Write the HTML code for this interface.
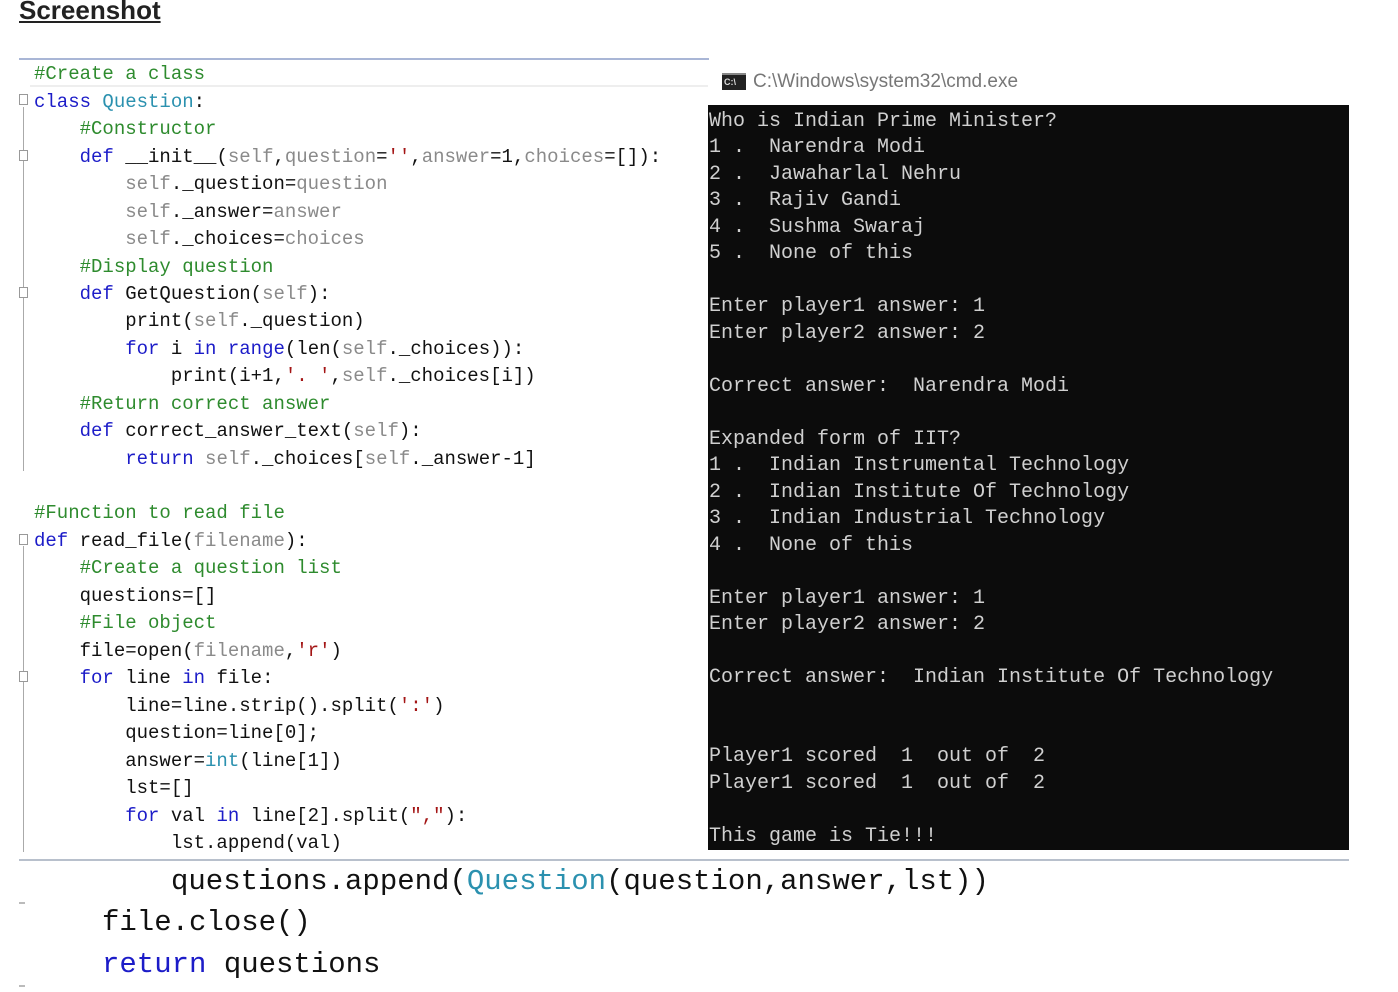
<!DOCTYPE html>
<html><head><meta charset="utf-8"><style>
body{margin:0;width:1398px;height:992px;background:#fff;position:relative;overflow:hidden;font-family:"Liberation Mono",monospace}
.h{position:absolute;left:19px;top:-5px;font:bold 26px "Liberation Sans",sans-serif;text-decoration:underline;color:#222}
.c{position:absolute;left:34px;height:28px;line-height:28px;font-size:19px;white-space:pre;color:#111;margin-top:2px}
.k{color:#1c1cc8}.m{color:#2e8b2e}.g{color:#8a8a8a}.t{color:#2b91af}.s{color:#a31515}
.tl{position:absolute;left:709px;height:26px;line-height:26px;font-size:20px;white-space:pre;color:#d0d0d0;margin-top:3px}
.b{position:absolute;height:42px;line-height:42px;font-size:29px;white-space:pre;color:#111;margin-top:2px}
.fold{position:absolute;left:19px;width:7px;height:9px;border:1px solid #999;background:#fff}
</style></head><body>
<div class="h">Screenshot</div>
<div style="position:absolute;left:19px;top:58px;width:690px;height:2px;background:#a9b6d6"></div>
<div style="position:absolute;left:30px;top:85px;width:678px;height:2px;background:#eee"></div>
<div style="position:absolute;left:23px;top:107px;width:1px;height:364px;background:#aaa"></div>
<div style="position:absolute;left:23px;top:546px;width:1px;height:306px;background:#aaa"></div>
<div class="fold" style="top:94px"></div><div class="fold" style="top:150px"></div><div class="fold" style="top:287px"></div><div class="fold" style="top:534px"></div><div class="fold" style="top:671px"></div>
<div class="c" style="top:58px"><span class="m">#Create a class</span></div>
<div class="c" style="top:86px"><span class="k">class</span> <span class="t">Question</span>:</div>
<div class="c" style="top:113px"><span class="m">    #Constructor</span></div>
<div class="c" style="top:141px">    <span class="k">def</span> __init__(<span class="g">self</span>,<span class="g">question</span>=<span class="s">''</span>,<span class="g">answer</span>=1,<span class="g">choices</span>=[]):</div>
<div class="c" style="top:168px">        <span class="g">self</span>._question=<span class="g">question</span></div>
<div class="c" style="top:196px">        <span class="g">self</span>._answer=<span class="g">answer</span></div>
<div class="c" style="top:223px">        <span class="g">self</span>._choices=<span class="g">choices</span></div>
<div class="c" style="top:251px"><span class="m">    #Display question</span></div>
<div class="c" style="top:278px">    <span class="k">def</span> GetQuestion(<span class="g">self</span>):</div>
<div class="c" style="top:305px">        print(<span class="g">self</span>._question)</div>
<div class="c" style="top:333px">        <span class="k">for</span> i <span class="k">in</span> <span class="k">range</span>(len(<span class="g">self</span>._choices)):</div>
<div class="c" style="top:360px">            print(i+1,<span class="s">'. '</span>,<span class="g">self</span>._choices[i])</div>
<div class="c" style="top:388px"><span class="m">    #Return correct answer</span></div>
<div class="c" style="top:415px">    <span class="k">def</span> correct_answer_text(<span class="g">self</span>):</div>
<div class="c" style="top:443px">        <span class="k">return</span> <span class="g">self</span>._choices[<span class="g">self</span>._answer-1]</div>
<div class="c" style="top:497px"><span class="m">#Function to read file</span></div>
<div class="c" style="top:525px"><span class="k">def</span> read_file(<span class="g">filename</span>):</div>
<div class="c" style="top:552px"><span class="m">    #Create a question list</span></div>
<div class="c" style="top:580px">    questions=[]</div>
<div class="c" style="top:607px"><span class="m">    #File object</span></div>
<div class="c" style="top:635px">    file=open(<span class="g">filename</span>,<span class="s">'r'</span>)</div>
<div class="c" style="top:662px">    <span class="k">for</span> line <span class="k">in</span> file:</div>
<div class="c" style="top:690px">        line=line.strip().split(<span class="s">':'</span>)</div>
<div class="c" style="top:717px">        question=line[0];</div>
<div class="c" style="top:745px">        answer=<span class="t">int</span>(line[1])</div>
<div class="c" style="top:772px">        lst=[]</div>
<div class="c" style="top:800px">        <span class="k">for</span> val <span class="k">in</span> line[2].split(<span class="s">","</span>):</div>
<div class="c" style="top:827px">            lst.append(val)</div>
<div style="position:absolute;left:708px;top:60px;width:641px;height:46px;background:#fff"></div>
<div style="position:absolute;left:722px;top:73px;width:24px;height:17px;background:#222;border-top:2px solid #888;box-sizing:border-box;color:#ddd;font:bold 9px 'Liberation Sans';line-height:14px;padding-left:2px">C:\</div>
<div style="position:absolute;left:753px;top:71px;font:19px 'Liberation Sans',sans-serif;color:#777">C:\Windows\system32\cmd.exe</div>
<div style="position:absolute;left:708px;top:105px;width:641px;height:745px;background:#0c0c0c"></div>
<div class="tl" style="top:106px">Who is Indian Prime Minister?</div>
<div class="tl" style="top:132px">1 .  Narendra Modi</div>
<div class="tl" style="top:159px">2 .  Jawaharlal Nehru</div>
<div class="tl" style="top:185px">3 .  Rajiv Gandi</div>
<div class="tl" style="top:212px">4 .  Sushma Swaraj</div>
<div class="tl" style="top:238px">5 .  None of this</div>
<div class="tl" style="top:291px">Enter player1 answer: 1</div>
<div class="tl" style="top:318px">Enter player2 answer: 2</div>
<div class="tl" style="top:371px">Correct answer:  Narendra Modi</div>
<div class="tl" style="top:424px">Expanded form of IIT?</div>
<div class="tl" style="top:450px">1 .  Indian Instrumental Technology</div>
<div class="tl" style="top:477px">2 .  Indian Institute Of Technology</div>
<div class="tl" style="top:503px">3 .  Indian Industrial Technology</div>
<div class="tl" style="top:530px">4 .  None of this</div>
<div class="tl" style="top:583px">Enter player1 answer: 1</div>
<div class="tl" style="top:609px">Enter player2 answer: 2</div>
<div class="tl" style="top:662px">Correct answer:  Indian Institute Of Technology</div>
<div class="tl" style="top:741px">Player1 scored  1  out of  2</div>
<div class="tl" style="top:768px">Player1 scored  1  out of  2</div>
<div class="tl" style="top:821px">This game is Tie!!!</div>
<div style="position:absolute;left:19px;top:859px;width:1330px;height:2px;background:#b8c0cc"></div>
<div class="b" style="left:171px;top:859px">questions.append(<span class="t">Question</span>(question,answer,lst))</div>
<div class="b" style="left:102px;top:900px">file.close()</div>
<div class="b" style="left:102px;top:942px"><span class="k">return</span> questions</div>
<div style="position:absolute;left:19px;top:902px;width:6px;height:2px;background:#bbb"></div>
<div style="position:absolute;left:19px;top:985px;width:6px;height:2px;background:#bbb"></div>
</body></html>
